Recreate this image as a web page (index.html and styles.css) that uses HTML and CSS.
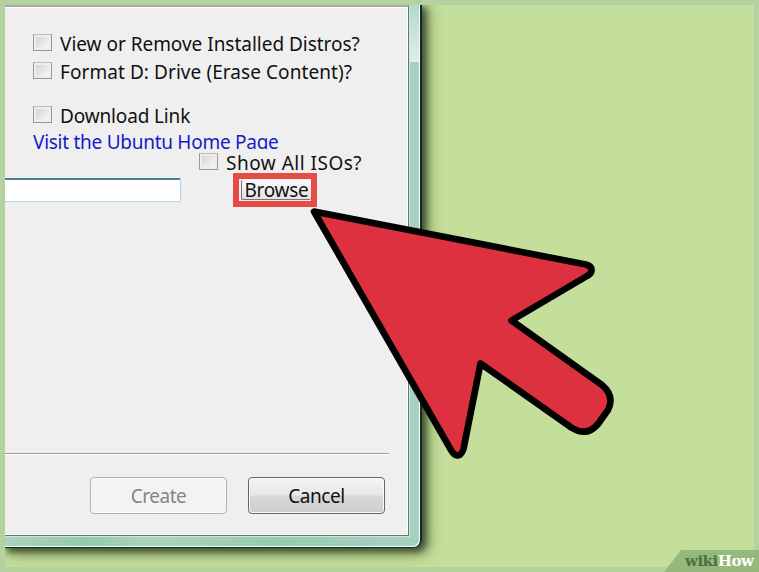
FILE: index.html
```
<!DOCTYPE html>
<html lang="en">
<head>
<meta charset="utf-8">
<title>Browse for an ISO</title>
<link rel="stylesheet" href="styles.css">
</head>
<body>
<main class="frame">
  <div class="stage">
    <div class="window">
      <section class="panel">
        <label class="check"><i class="box"></i><span class="t-view">View or Remove Installed Distros?</span></label>
        <label class="check format"><i class="box"></i><span class="t-format">Format D: Drive (Erase Content)?</span></label>
        <label class="check download"><i class="box"></i><span class="t-download">Download Link</span></label>
        <a class="link">Visit the Ubuntu Home Page</a>
        <label class="check isos"><i class="box"></i><span class="t-isos">Show All ISOs?</span></label>
        <div class="file-row">
          <div class="field"></div>
          <div class="highlight"><div class="browse">Browse</div></div>
        </div>
        <div class="footer">
          <div class="button disabled"><span>Create</span></div>
          <div class="button"><span>Cancel</span></div>
        </div>
      </section>
    </div>
  </div>
  <svg class="pointer" viewBox="0 0 759 572" width="759" height="572">
    <path d="M314 211.500 L586 264.500 Q592 266 591.500 271 Q591 274 587 276 L511.500 320.500 L602 385 Q615 396 608 410 L598 424 Q587 437 572 428 L480.500 363.500 L463.500 449 Q461 456 457 455.500 Q454 455 451 450 Z" fill="#de3140" stroke="#000" stroke-width="6.6" stroke-linejoin="round"/>
  </svg>
  <div class="brand"><span class="wiki">wiki</span><span class="how">How</span></div>
</main>
</body>
</html>
```
FILE: styles.css
```
* { box-sizing: border-box; }
body { margin: 0; }
.frame {
  position: relative;
  width: 759px;
  height: 572px;
  padding: 5px;
  background: #b4d2a0;
  overflow: hidden;
  font: 19px/24px "Noto Sans", sans-serif;
  color: #111;
}
.stage { height: 562px; background: #c4df9b; overflow: hidden; }
.window {
  width: 417px;
  height: 543px;
  border: solid #14291f;
  border-width: 0 2px 1px 0;
  border-radius: 0 0 8px 0;
  background:
    linear-gradient(#b4d8cc, #e0f0e9 57px, transparent 57px) right top / 12px 57px no-repeat,
    linear-gradient(90deg, #a9d3bd, #98c8b0 20%, #aad4bf 35%, #9acab4 65%, #a6d2bf);
  box-shadow: inset -1px -1px 0 #effff8, 3px 3px 6px 1px #25301bb0, 5px 4px 14px 2px #43582b99;
}
.panel {
  display: flex;
  flex-direction: column;
  width: 404px;
  height: 531px;
  padding-top: 25px;
  background: #efefef;
  border: solid #5c7c70;
  border-width: 2px 1px 1px 0;
  border-top-color: #a6ad9f;
  box-shadow: inset -1px 1px 0 #fff, inset 0 -1px 0 #fff, 1px 1px 0 #c8eadc;
}
.check { display: flex; align-items: center; height: 24px; margin-left: 28px; white-space: nowrap; flex: none; }
.box {
  width: 19px;
  height: 17px;
  margin: -3px 8px 0 0;
  border: 1px solid #999;
  border-top-color: #bbb;
  background: linear-gradient(135deg, #cfcfcf, #f7f7f7 85%);
  box-shadow: inset 0 0 0 2px #eee;
  flex: none;
}
.t-view { letter-spacing: -0.02px; }
.t-format { letter-spacing: 0.07px; }
.t-download { letter-spacing: -0.15px; }
.t-isos { letter-spacing: 0.5px; }
.format { margin-top: 4px; }
.download { margin-top: 20px; }
.link { display: block; height: 21px; margin-left: 28px; overflow: hidden; color: #1919c9; white-space: nowrap; letter-spacing: -0.27px; line-height: 28px; flex: none; }
.isos { margin: 2px 0 0 194px; }
.file-row { display: flex; align-items: center; height: 34px; margin-top: -2px; flex: none; }
.field { width: 176px; height: 24px; background: #fff; border: 1px solid #add6e3; border-top: 2px solid #4b7c9c; border-left: 0; border-radius: 0 2px 2px 0; }
.highlight { width: 84px; height: 34px; margin-left: 52px; padding: 1px 0 0 2px; border: 6px solid #e64c46; background: #efefef; }
.browse { height: 20px; border: 1px solid #777; border-width: 0 0 1px 1px; border-radius: 2px; background: linear-gradient(#fafafa, #e2e2e2); text-align: center; line-height: 21px; white-space: nowrap; letter-spacing: -0.3px; }
.footer { display: flex; gap: 21px; width: 384px; height: 61px; margin-top: 246px; padding: 23px 0 0 85px; border-top: 1px solid #999; box-shadow: inset 0 1px 0 #fff; flex: none; }
.button {
  display: flex;
  align-items: center;
  justify-content: center;
  width: 137px;
  height: 37px;
  border: 1px solid #666;
  border-radius: 4px;
  background: linear-gradient(#f4f4f4, #e8e8e8 49%, #d8d8d8 51%, #cdcdcd);
  box-shadow: inset 0 0 0 1px #fafafa;
  letter-spacing: -0.45px;
  flex: none;
}
.disabled { color: #858585; border-color: #aeb1b4; background: #f3f3f3; }
.pointer { position: absolute; left: 0; top: 0; }
.brand {
  position: absolute;
  right: 0;
  bottom: 0;
  width: 95px;
  height: 22px;
  padding-left: 21px;
  background: #94b97c;
  clip-path: polygon(17px 0, 100% 0, 100% 100%, 0 100%);
  font: bold 15px/22px "DejaVu Serif", serif;
  letter-spacing: -0.5px;
}
.wiki { color: #526f3e; }
.how { color: #fff; }
```
